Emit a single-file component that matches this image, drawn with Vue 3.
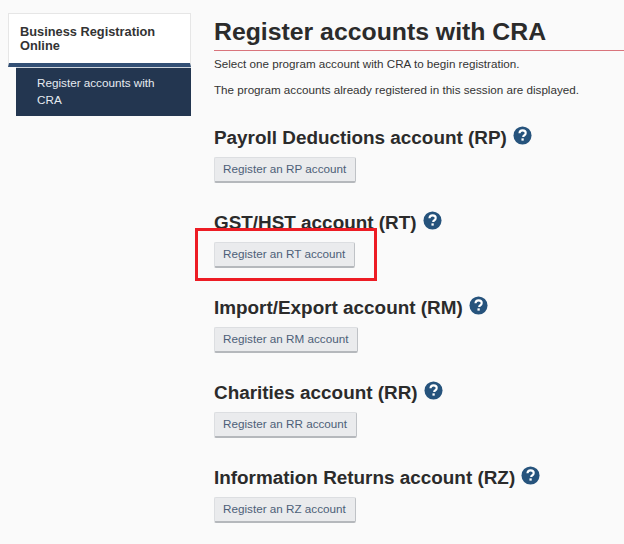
<script setup>
const accounts = [
  { title: 'Payroll Deductions account (RP)', button: 'Register an RP account' },
  { title: 'GST/HST account (RT)', button: 'Register an RT account', marked: true },
  { title: 'Import/Export account (RM)', button: 'Register an RM account' },
  { title: 'Charities account (RR)', button: 'Register an RR account' },
  { title: 'Information Returns account (RZ)', button: 'Register an RZ account' }
]
</script>

<template>
  <div class="page">
    <aside class="side">
      <div class="side-head">Business Registration Online</div>
      <div class="side-item">Register accounts with CRA</div>
    </aside>
    <main class="content">
      <h1>Register accounts with CRA</h1>
      <p class="intro first">Select one program account with CRA to begin registration.</p>
      <p class="intro">The program accounts already registered in this session are displayed.</p>
      <section v-for="a in accounts" :key="a.title" class="account">
        <h2>
          {{ a.title }}
          <svg class="help" viewBox="0 0 20 20" width="19" height="19">
            <circle cx="10" cy="10" r="9.5" fill="#26537c" />
            <path d="M6.8 7.6C6.9 5.7 8.2 4.6 10.1 4.6c1.9 0 3.3 1.1 3.3 2.8 0 1.3-.7 2-1.7 2.6-.8.5-1 .8-1 1.6" fill="none" stroke="#fff" stroke-width="2.2" />
            <rect x="8.9" y="13" width="2.4" height="2.4" fill="#fff" />
          </svg>
        </h2>
        <div class="btn-wrap">
          <button>{{ a.button }}</button>
          <div v-if="a.marked" class="mark"></div>
        </div>
      </section>
    </main>
  </div>
</template>

<style>
body {
  margin: 0;
  background: #fafafa;
}
</style>

<style scoped>
.page {
  display: flex;
  width: 624px;
  height: 544px;
  overflow: hidden;
  background: #fafafa;
  color: #2b2b2b;
  font-family: "Liberation Sans", Arial, sans-serif;
}

.side {
  width: 183px;
  margin: 13px 0 0 8px;
  flex-shrink: 0;
}

.side-head {
  box-sizing: border-box;
  height: 54px;
  padding: 11px 12px 0 11px;
  background: #fff;
  border: 1px solid #e6e6e6;
  border-bottom: 4px solid #335075;
  font-size: 12.8px;
  line-height: 14px;
  font-weight: bold;
  color: #333;
}

.side-item {
  box-sizing: border-box;
  height: 49px;
  margin-left: 8px;
  padding: 6px 20px 0 21px;
  background: #233650;
  border-top: 1px solid #cfd5dc;
  color: #e6ebf0;
  font-size: 11.7px;
  line-height: 17px;
}

.content {
  flex: 1;
  margin-left: 23px;
  min-width: 0;
}

h1 {
  margin: 18px 0 0;
  height: 32px;
  border-bottom: 1px solid #d9747c;
  font-size: 24.8px;
  line-height: 28px;
  font-weight: bold;
  color: #2b2b2b;
}

.intro {
  margin: 0;
  font-size: 11.65px;
  line-height: 16px;
  color: #333;
}

.intro.first {
  margin: 5px 0 10px;
}

.account {
  height: 85px;
}

.intro + .account {
  margin-top: 28px;
}

h2 {
  display: flex;
  align-items: flex-start;
  margin: 0;
  height: 24px;
  font-size: 18.9px;
  line-height: 24px;
  font-weight: bold;
  color: #2b2b2b;
  white-space: nowrap;
}

.help {
  margin: 0 0 0 6px;
}

.btn-wrap {
  position: relative;
  margin-top: 7px;
  width: max-content;
}

button {
  display: block;
  box-sizing: border-box;
  height: 26px;
  padding: 0 9px 2px 8px;
  background: #eaebed;
  border: 1px solid #dcdee1;
  border-bottom: 2px solid #b5b8bc;
  border-right: 1px solid #bfc2c6;
  border-radius: 2px;
  font-family: inherit;
  font-size: 11.7px;
  color: #4d5f78;
}

.mark {
  position: absolute;
  left: -19px;
  top: -14px;
  box-sizing: content-box;
  width: 176px;
  height: 47px;
  border: 3px solid #ed1c24;
}
</style>
